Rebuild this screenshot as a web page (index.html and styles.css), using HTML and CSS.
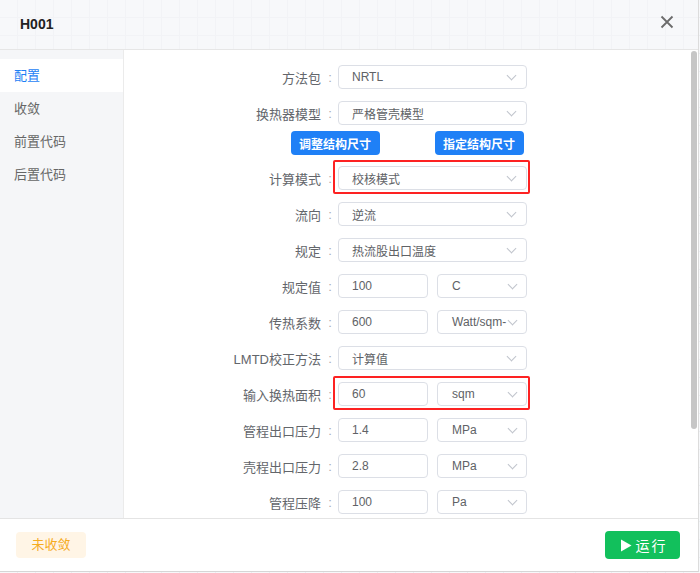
FILE: index.html
```html
<!DOCTYPE html>
<html lang="zh">
<head>
<meta charset="utf-8">
<title>H001</title>
<link rel="stylesheet" href="styles.css">
</head>
<body>
<div class="dialog">
  <div class="header">
    <div class="title">H001</div>
    <svg class="close" width="14" height="14" viewBox="0 0 14 14"><path d="M1.5 1.5 L12.5 12.5 M12.5 1.5 L1.5 12.5" stroke="#6b6b6b" stroke-width="1.8" fill="none"/></svg>
  </div>
  <div class="main">
    <div class="sidebar">
      <div class="nav active">配置</div>
      <div class="nav">收敛</div>
      <div class="nav">前置代码</div>
      <div class="nav">后置代码</div>
    </div>
    <div class="content">
      <div class="row"><span class="label">方法包</span><span class="colon">:</span><div class="select"><span>NRTL</span><i class="chev"></i></div></div>
      <div class="row"><span class="label">换热器模型</span><span class="colon">:</span><div class="select"><span>严格管壳模型</span><i class="chev"></i></div></div>
      <div class="btns"><button class="btn">调整结构尺寸</button><button class="btn">指定结构尺寸</button></div>
      <div class="row row-first"><span class="label">计算模式</span><span class="colon">:</span><div class="ctl marked"><div class="select"><span>校核模式</span><i class="chev"></i></div></div></div>
      <div class="row"><span class="label">流向</span><span class="colon">:</span><div class="select"><span>逆流</span><i class="chev"></i></div></div>
      <div class="row"><span class="label">规定</span><span class="colon">:</span><div class="select"><span>热流股出口温度</span><i class="chev"></i></div></div>
      <div class="row"><span class="label">规定值</span><span class="colon">:</span><div class="pair"><div class="input">100</div><div class="select unit"><span>C</span><i class="chev"></i></div></div></div>
      <div class="row"><span class="label">传热系数</span><span class="colon">:</span><div class="pair"><div class="input">600</div><div class="select unit"><span>Watt/sqm-</span><i class="chev"></i></div></div></div>
      <div class="row"><span class="label">LMTD校正方法</span><span class="colon">:</span><div class="select"><span>计算值</span><i class="chev"></i></div></div>
      <div class="row"><span class="label">输入换热面积</span><span class="colon">:</span><div class="pair marked"><div class="input">60</div><div class="select unit"><span>sqm</span><i class="chev"></i></div></div></div>
      <div class="row"><span class="label">管程出口压力</span><span class="colon">:</span><div class="pair"><div class="input">1.4</div><div class="select unit"><span>MPa</span><i class="chev"></i></div></div></div>
      <div class="row"><span class="label">壳程出口压力</span><span class="colon">:</span><div class="pair"><div class="input">2.8</div><div class="select unit"><span>MPa</span><i class="chev"></i></div></div></div>
      <div class="row"><span class="label">管程压降</span><span class="colon">:</span><div class="pair"><div class="input">100</div><div class="select unit"><span>Pa</span><i class="chev"></i></div></div></div>
    </div>
    <div class="scrollbar"><div class="thumb"></div></div>
  </div>
  <div class="footer">
    <span class="status">未收敛</span>
    <button class="run"><svg width="12" height="13" viewBox="0 0 12 13"><path d="M1 0.5 L11.5 6.5 L1 12.5 Z" fill="#fff"/></svg><span>运行</span></button>
  </div>
</div>
</body>
</html>
```
FILE: styles.css
```css
* { box-sizing: border-box; }
html, body { margin: 0; padding: 0; }
body {
  width: 700px;
  height: 573px;
  overflow: hidden;
  font-family: "Liberation Sans", "Noto Sans CJK SC", sans-serif;
  background-color: #f7f8fa;
  background-image:
    linear-gradient(to right, #eceef2 1px, transparent 1px),
    linear-gradient(to bottom, #eceef2 1px, transparent 1px);
  background-size: 18px 18px;
  background-position: 17px 17px;
}
.dialog {
  width: 699px;
  height: 572px;
  display: flex;
  flex-direction: column;
  border-right: 1px solid #dcdcdc;
  border-bottom: 1px solid #d6d6d6;
}
.header {
  height: 50px;
  flex: none;
  display: flex;
  align-items: center;
  justify-content: space-between;
  padding: 0 24px 0 20px;
  border-bottom: 1px solid #e6e6e6;
  background: rgba(247, 248, 250, 0.55);
}
.title {
  font-size: 14px;
  font-weight: bold;
  color: #222;
  margin-top: -2px;
}
.close { margin-top: -5px; }
.main {
  flex: 1;
  display: flex;
  min-height: 0;
  background: #fff;
}
.sidebar {
  width: 124px;
  flex: none;
  background: #f5f6f8;
  border-right: 1px solid #ebebeb;
  padding-top: 9px;
}
.nav {
  height: 33px;
  line-height: 33px;
  padding-left: 14px;
  font-size: 13px;
  color: #666;
}
.nav.active { background: #fff; color: #1e7ff5; }
.content {
  flex: 1;
  overflow: hidden;
  padding: 15px 0 0 0;
}
.scrollbar {
  width: 8px;
  flex: none;
  padding: 1px 1px 0 1px;
}
.thumb {
  height: 378px;
  border-radius: 3px;
  background: #c6c6c6;
}
.row {
  display: grid;
  grid-template-columns: 197px 17px 189px;
  align-items: center;
  height: 24px;
  margin-bottom: 12px;
}
.row-first { margin-top: 11px; }
.label {
  text-align: right;
  font-size: 13px;
  color: #63666b;
  white-space: nowrap;
}
.colon {
  text-align: center;
  font-size: 13px;
  color: #a8abb2;
  padding-left: 1px;
}
.select, .input {
  height: 24px;
  border: 1px solid #dcdfe6;
  border-radius: 4px;
  display: flex;
  align-items: center;
  font-size: 12px;
  color: #606266;
  background: #fff;
}
.select { justify-content: space-between; padding: 0 11px 0 13px; }
.select span { white-space: nowrap; }
.input { padding-left: 13px; }
.unit { padding-left: 14px; padding-right: 10px; }
.chev {
  width: 7px;
  height: 7px;
  border-right: 1px solid #c0c4cc;
  border-bottom: 1px solid #c0c4cc;
  transform: rotate(45deg);
  margin-top: -4px;
  flex: none;
  margin-left: 2px;
}
.pair {
  display: grid;
  grid-template-columns: 90px 90px;
  column-gap: 9px;
}
.marked { position: relative; }
.marked::after {
  content: "";
  position: absolute;
  left: -5px;
  right: -3px;
  top: -6px;
  bottom: -4px;
  border: 2px solid #fd2222;
  border-radius: 2px;
}
.btns {
  display: flex;
  justify-content: center;
  gap: 55px;
  margin-top: -6px;
}
.btn {
  width: 89px;
  height: 24px;
  border: none;
  border-radius: 4px;
  background: #1f80f6;
  color: #fff;
  font-family: inherit;
  font-size: 12px;
  font-weight: bold;
  padding: 0;
}
.footer {
  height: 53px;
  flex: none;
  display: flex;
  align-items: center;
  justify-content: space-between;
  padding: 0 18px 0 16px;
  border-top: 1px solid #e4e4e4;
  background: #fff;
}
.status {
  width: 70px;
  height: 26px;
  line-height: 26px;
  text-align: center;
  border-radius: 4px;
  background: #fff5e6;
  color: #f6ac1f;
  font-size: 13px;
}
.run {
  width: 75px;
  height: 28px;
  border: none;
  border-radius: 4px;
  background: #12c05c;
  color: #fff;
  font-family: inherit;
  font-size: 14px;
  display: flex;
  align-items: center;
  justify-content: center;
  gap: 4px;
  padding: 0 0 0 2px;
}
.run span { letter-spacing: 2px; }
```
